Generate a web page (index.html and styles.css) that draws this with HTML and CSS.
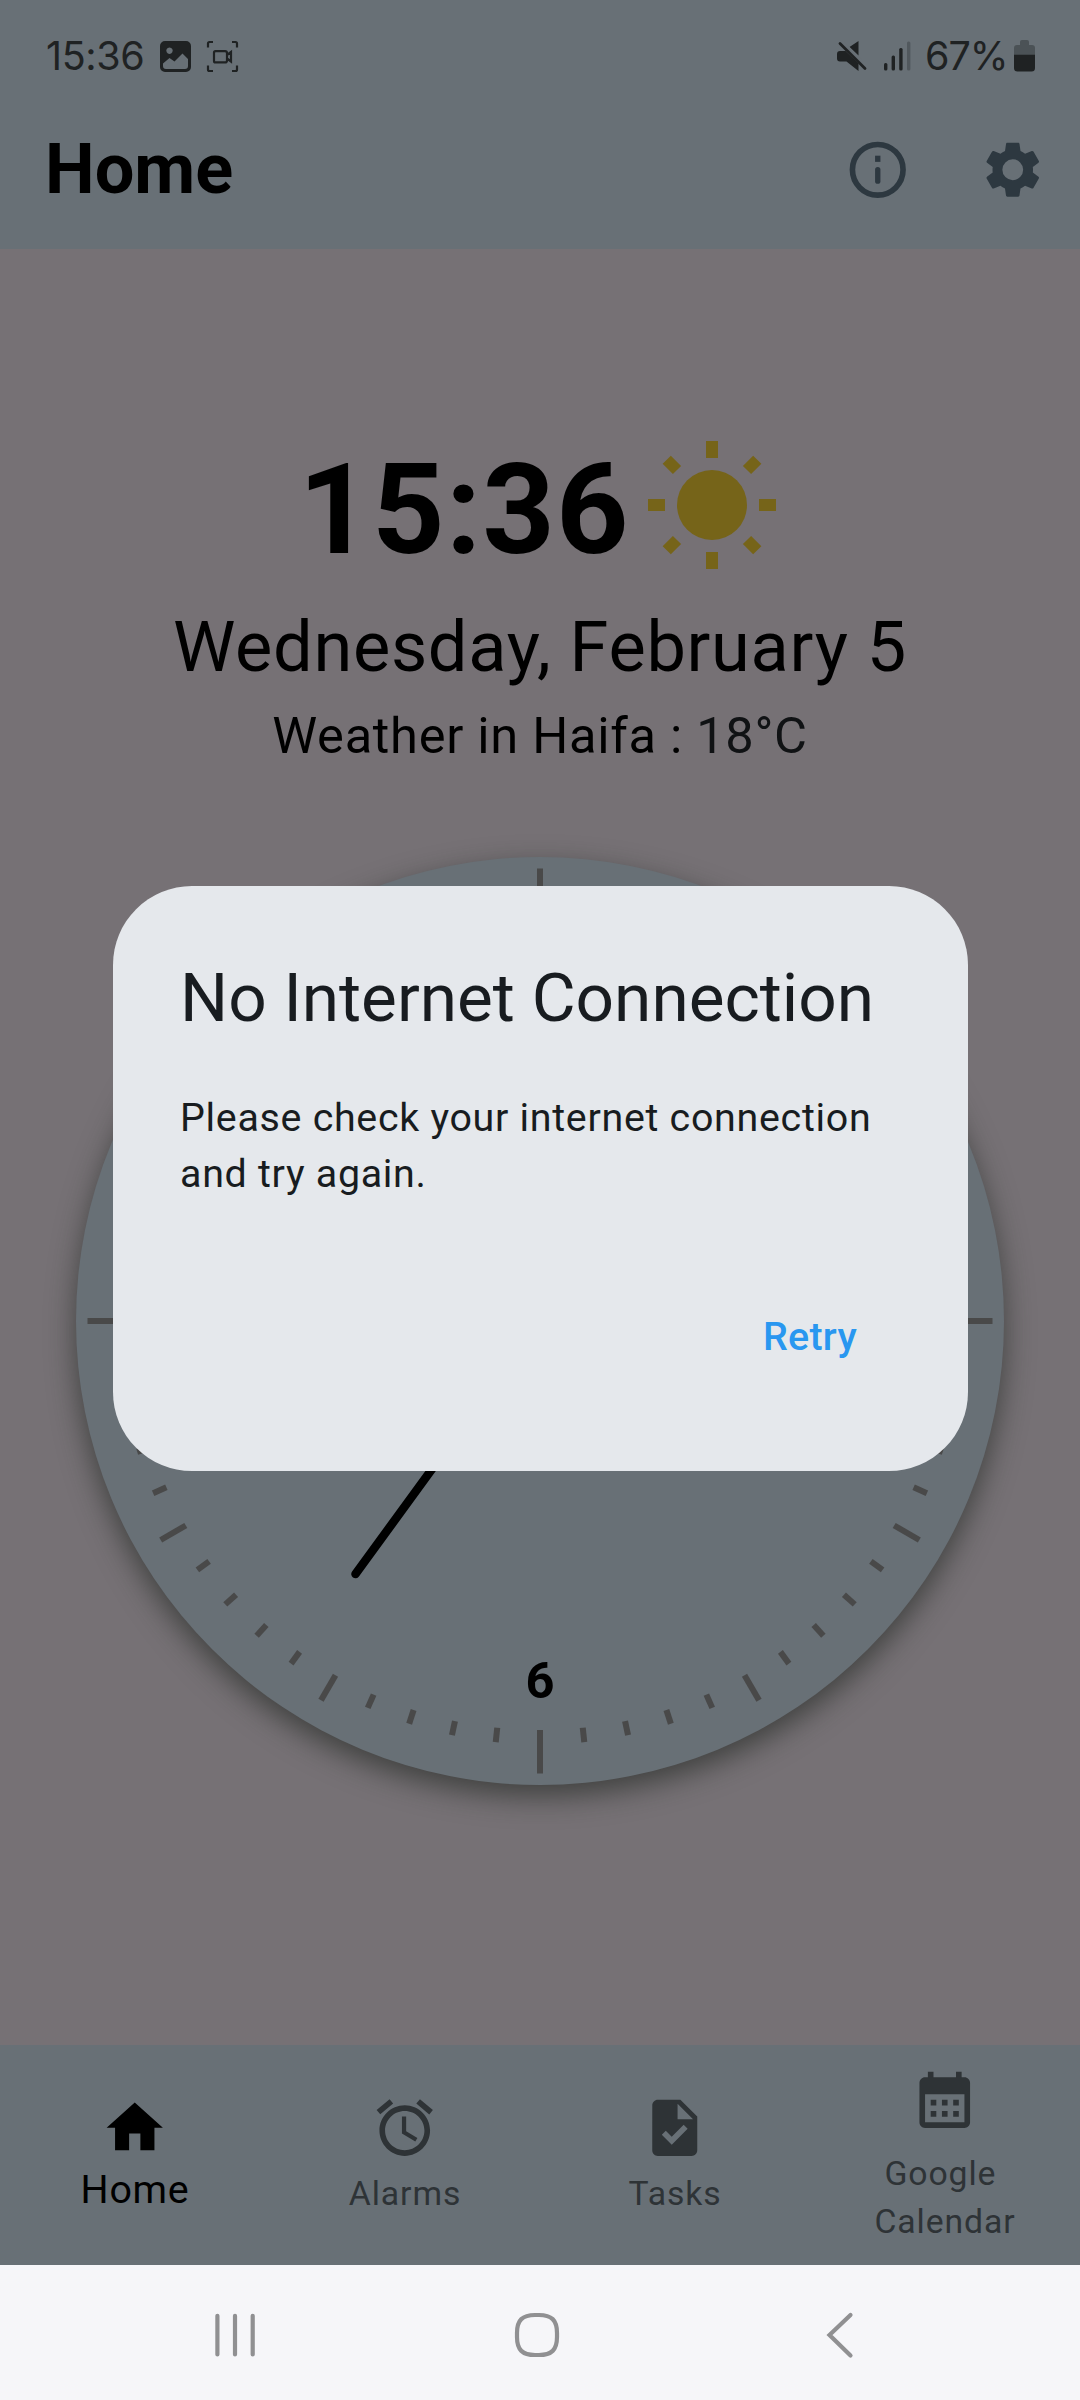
FILE: index.html
```html
<!DOCTYPE html>
<html lang="en">
<head>
<meta charset="utf-8">
<title>Home</title>
<link rel="stylesheet" href="styles.css">
</head>
<body>
<div class="screen">
  <header class="top">
    <div class="status">
      <span class="status-time">15:36</span>
      <svg class="status-picture" viewBox="0 0 31 31"><path fill-rule="evenodd" fill="currentColor" d="M5 0h21a5 5 0 0 1 5 5v21a5 5 0 0 1-5 5H5a5 5 0 0 1-5-5V5a5 5 0 0 1 5-5zM3 22.500V25a3 3 0 0 0 3 3h19a3 3 0 0 0 3-3v-7L22.500 12.500 14.500 20.500 9.500 17zM9.500 6.500a3.200 3.200 0 1 0 .01 0z"/></svg>
      <svg class="status-capture" viewBox="0 0 31 31" fill="none" stroke="currentColor" stroke-width="2.200"><path d="M1 6.500V2.500A1.500 1.500 0 0 1 2.500 1H6M25 1h3.500A1.500 1.500 0 0 1 30 2.500v4M30 24.500v4a1.500 1.500 0 0 1-1.500 1.500H25M6 30H2.500A1.500 1.500 0 0 1 1 28.500v-4"/><path d="M8.500 10.200h9.500a2 2 0 0 1 2 2v7.200a2 2 0 0 1-2 2H8.500a1.500 1.500 0 0 1-1.500-1.500v-8.200a1.500 1.500 0 0 1 1.500-1.500zM20 14l4-3v9.500l-4-3"/></svg>
      <span class="spacer"></span>
      <svg class="status-mute" viewBox="0 0 30 30"><path fill="currentColor" d="M21.500 0v14.500L12.500 6zM3 10h5.500L21.500 22.500V30L9.500 20.500H3a3 3 0 0 1-3-3V13a3 3 0 0 1 3-3z"/><path d="M6.500 1.500L24 19" stroke="#687076" stroke-width="2"/><path d="M3 2.500l25 25" stroke="currentColor" stroke-width="2.800" stroke-linecap="round"/></svg>
      <svg class="status-signal" viewBox="0 0 27 30" fill="currentColor"><rect x="0" y="22" width="3.400" height="7.500" rx="1.500"/><rect x="7.600" y="14.500" width="3.400" height="15" rx="1.500"/><rect x="15.200" y="7" width="3.400" height="22.500" rx="1.500"/><rect x="23" y="0.500" width="3.400" height="29" rx="1.500" opacity=".3"/></svg>
      <span class="status-level">67%</span>
      <svg class="status-battery" viewBox="0 0 21 32"><path fill="#4b5256" d="M8 0h5a2 2 0 0 1 2 2v3h3a3 3 0 0 1 3 3v7H0V8a3 3 0 0 1 3-3h3V2a2 2 0 0 1 2-2z"/><path fill="currentColor" d="M0 14.700h21V28a3.500 3.500 0 0 1-3.500 3.500h-14A3.500 3.500 0 0 1 0 28z"/></svg>
    </div>
    <div class="appbar">
      <h1 class="appbar-title">Home</h1>
      <svg class="icon" viewBox="0 0 24 24"><circle cx="12" cy="12" r="9" fill="none" stroke="currentColor" stroke-width="2"/><rect x="11.050" y="7" width="1.900" height="2.200" fill="currentColor"/><rect x="11.050" y="11" width="1.900" height="6" rx=".95" fill="currentColor"/></svg>
      <svg class="icon" viewBox="0 0 24 24"><path fill="currentColor" d="M19.140,12.940c0.040-0.300,0.060-0.610,0.060-0.940c0-0.320-0.020-0.640-0.070-0.940l2.030-1.580c0.180-0.140,0.230-0.410,0.120-0.610l-1.920-3.320c-0.120-0.220-0.370-0.290-0.590-0.220l-2.390,0.960c-0.500-0.380-1.030-0.700-1.620-0.940L14.400,2.810c-0.040-0.240-0.240-0.410-0.480-0.410h-3.840c-0.240,0-0.430,0.170-0.470,0.410L9.250,5.350C8.660,5.590,8.120,5.920,7.630,6.290L5.240,5.330c-0.220-0.080-0.470,0-0.590,0.220L2.740,8.870C2.620,9.080,2.660,9.340,2.860,9.480l2.030,1.580C4.840,11.360,4.800,11.690,4.800,12s0.020,0.640,0.070,0.940l-2.030,1.580c-0.180,0.140-0.230,0.410-0.120,0.610l1.920,3.320c0.120,0.220,0.370,0.290,0.590,0.220l2.390-0.960c0.500,0.380,1.030,0.700,1.620,0.940l0.360,2.540c0.050,0.240,0.240,0.410,0.480,0.410h3.840c0.240,0,0.440-0.170,0.470-0.410l0.360-2.540c0.590-0.240,1.130-0.560,1.620-0.940l2.390,0.960c0.220,0.080,0.470,0,0.590-0.220l1.920-3.320c0.120-0.220,0.070-0.470-0.120-0.610L19.140,12.940zM12,15.700a3.700,3.700 0 1 1 0-7.400a3.700,3.700 0 1 1 0,7.400z"/></svg>
    </div>
  </header>

  <main class="content">
    <div class="now">
      <span class="now-time">15:36</span>
      <svg class="sun" viewBox="-70 -70 140 140" fill="currentColor"><circle r="35"/><path d="M-6-64H6v17H-6zM-6 47H6v17H-6zM-64-6h17V6h-17zM47-6h17V6H47z"/><path transform="rotate(45)" d="M-5.800-64H5.800v14.500H-5.800zM-5.800 49.500H5.800V64H-5.800zM-64-5.800h14.500V5.800H-64zM49.500-5.800H64V5.800H49.500z"/></svg>
    </div>
    <div class="date">Wednesday, February 5</div>
    <div class="weather">Weather in Haifa : <span class="weather-temp">18°C</span></div>
    <div class="clock">
      <svg class="clock-face" viewBox="-464 -464 928 928">
        <g class="ticks" id="ticks"></g>
        <text class="numeral" x="0" y="377">6</text>
        <path class="hand" d="M0 0L209 68M0 0L-184.500 253"/>
      </svg>
    </div>
  </main>

  <nav class="tabs">
    <div class="tab tab-active">
      <svg class="icon" viewBox="0 0 24 24"><path fill="currentColor" d="M10 20v-6h4v6h5v-8h3L12 3 2 12h3v8z"/></svg>
      <span class="tab-label">Home</span>
    </div>
    <div class="tab">
      <svg class="icon" viewBox="0 0 24 24"><path fill="currentColor" d="M22 5.720l-4.600-3.860-1.290 1.530 4.600 3.860L22 5.720zM7.880 3.390L6.600 1.860 2 5.710l1.290 1.530 4.590-3.850zM12.500 8H11v6l4.750 2.850.75-1.230-4-2.370V8zM12 4c-4.970 0-9 4.030-9 9s4.020 9 9 9c4.970 0 9-4.030 9-9s-4.030-9-9-9zm0 16c-3.870 0-7-3.130-7-7s3.130-7 7-7 7 3.130 7 7-3.130 7-7 7z"/></svg>
      <span class="tab-label">Alarms</span>
    </div>
    <div class="tab">
      <svg class="icon" viewBox="0 0 24 24"><path fill="currentColor" d="M14 2H6c-1.100 0-1.990.9-1.990 2L4 20c0 1.100.89 2 1.990 2H18c1.100 0 2-.9 2-2V8l-6-6zm-3.060 16L7.400 14.460l1.410-1.410 2.120 2.120 4.240-4.240 1.410 1.410L10.940 18zM13 9V3.500L18.500 9H13z"/></svg>
      <span class="tab-label">Tasks</span>
    </div>
    <div class="tab tab-two-line">
      <svg class="icon" viewBox="0 0 24 24"><path fill="currentColor" d="M19 4h-1V2h-2v2H8V2H6v2H5c-1.110 0-1.990.9-1.990 2L3 20c0 1.100.89 2 2 2h14c1.100 0 2-.9 2-2V6c0-1.100-.9-2-2-2zm0 16H5V10h14v10zM9 14H7v-2h2v2zm4 0h-2v-2h2v2zm4 0h-2v-2h2v2zm-8 4H7v-2h2v2zm4 0h-2v-2h2v2zm4 0h-2v-2h2v2z"/></svg>
      <span class="tab-label">Google&nbsp;<br>Calendar</span>
    </div>
  </nav>

  <footer class="sysnav">
    <svg class="sysnav-icon" viewBox="0 0 48 48"><path d="M6.400 4.800v38.600M24 4.800v38.600M41.700 4.800v38.600"/></svg>
    <svg class="sysnav-icon" viewBox="0 0 48 48"><path d="M24 4h2C38.500 4 44 9 44 22v4c0 13-5.500 18-18 18h-4C9.500 44 4 39 4 26v-4C4 9 9.500 4 22 4z"/></svg>
    <svg class="sysnav-icon" viewBox="0 0 48 48"><path d="M35.500 4L14.500 24l21 20.500"/></svg>
  </footer>

  <div class="dialog" role="dialog">
    <h2 class="dialog-title">No Internet Connection</h2>
    <p class="dialog-text">Please check your internet connection and try again.</p>
    <span class="dialog-action">Retry</span>
  </div>
</div>
<script src="clock.js"></script>
</body>
</html>
```
FILE: clock.js
```js
// Minute marks: longest on the quarters, medium on the hours.
const ticks = document.getElementById('ticks');
for (let i = 0; i < 60; i++) {
  const outer = i % 15 === 0 ? 452.5 : i % 5 === 0 ? 438 : 423.5;
  const line = document.createElementNS('http://www.w3.org/2000/svg', 'line');
  line.setAttribute('y1', -409);
  line.setAttribute('y2', -outer);
  line.setAttribute('transform', `rotate(${i * 6})`);
  ticks.appendChild(line);
}
```
FILE: styles.css
```css
* { box-sizing: border-box; }
body { margin: 0; font-family: Roboto, "Noto Sans", sans-serif; }
h1, h2, p { margin: 0; }
svg { display: block; flex: none; overflow: visible; }

.screen {
  position: relative;
  display: flex;
  flex-direction: column;
  width: 1080px;
  height: 2400px;
  background: #767175;
  overflow: hidden;
}

.top { height: 249px; background: #687076; }

.status {
  display: flex;
  align-items: flex-start;
  height: 90px;
  padding: 41px 45px 0 46px;
  color: #1f2223;
  font-family: Inter, Roboto, sans-serif;
  font-size: 39.500px;
  line-height: 30px;
}
.status-time { width: 114px; letter-spacing: -.400px; }
.status-picture { width: 31px; height: 31px; }
.status-capture { width: 31px; height: 31px; margin-left: 16px; }
.spacer { flex: 1; }
.status-mute { width: 30px; height: 30px; }
.status-signal { width: 27px; height: 30px; margin-left: 17px; }
.status-level { width: 89px; margin-left: 14px; letter-spacing: -1px; }
.status-battery { width: 21px; height: 32px; margin-top: -1px; }

.appbar {
  display: flex;
  align-items: center;
  height: 158px;
  padding: 0 34px 0 45px;
  color: #2d3840;
}
.appbar-title { flex: 1; font-size: 70.300px; font-weight: 700; color: #000; }
.icon { width: 67.500px; height: 67.500px; }
.appbar .icon { margin-top: 2px; }
.appbar .icon + .icon { margin-left: 67.500px; }

.content {
  display: flex;
  flex-direction: column;
  align-items: center;
  height: 1796px;
  padding-top: 186px;
  color: #000;
}
.now { display: flex; align-items: center; height: 140px; }
.now-time { padding-top: 9px; font-size: 126.560px; font-weight: 700; line-height: 148px; letter-spacing: 1px; }
.sun { width: 140px; height: 140px; margin-left: 12px; color: #766419; }
.date { margin-top: 22px; font-size: 70.300px; line-height: 100px; letter-spacing: .7px; }
.weather { height: 72px; margin-top: 3px; font-size: 50.600px; line-height: 72px; letter-spacing: .7px; }
.weather-temp { color: #101214; }
.clock {
  width: 928px;
  height: 928px;
  margin-top: 85px;
  border-radius: 50%;
  background: #687076;
  box-shadow: 0 11px 29px rgba(40, 44, 40, .7);
}
.clock-face { width: 928px; height: 928px; }
.ticks { stroke: #494949; stroke-width: 6; }
.numeral { font-size: 50.600px; font-weight: 700; text-anchor: middle; }
.hand { fill: none; stroke: #000; stroke-width: 8.500; stroke-linecap: round; }

.tabs { display: flex; height: 220px; background: #687076; color: #2e3336; }
.tab {
  display: flex;
  flex: 1;
  flex-direction: column;
  align-items: center;
  justify-content: center;
  gap: 8px;
  padding-top: 2px;
}
.tab-label { font-size: 33.750px; line-height: 48.200px; letter-spacing: .9px; text-align: center; }
.tab-active { color: #000; }
.tab-active .tab-label { margin: -4px 0 4px; font-size: 39.400px; letter-spacing: .7px; }
.tab-two-line { gap: 16px; }

.sysnav { display: flex; height: 135px; padding: 46px 0 0 211px; gap: 254px; background: #f6f6f9; }
.sysnav-icon { width: 48px; height: 48px; fill: none; stroke: #909092; stroke-width: 4.200; stroke-linecap: round; }

.dialog {
  position: absolute;
  top: 886px;
  left: 112.500px;
  display: flex;
  flex-direction: column;
  width: 855px;
  height: 585px;
  padding: 66.500px 67.500px;
  border-radius: 79px;
  background: #e5e8ec;
  color: #181c20;
}
.dialog-title { font-size: 67.500px; font-weight: 400; line-height: 90px; }
.dialog-text { margin-top: 47px; font-size: 39.400px; line-height: 56.250px; letter-spacing: .7px; }
.dialog-action {
  align-self: flex-end;
  margin: 107px 43px 0 0;
  font-size: 39.400px;
  font-weight: 500;
  line-height: 56px;
  letter-spacing: .3px;
  color: #2997f0;
}
```
